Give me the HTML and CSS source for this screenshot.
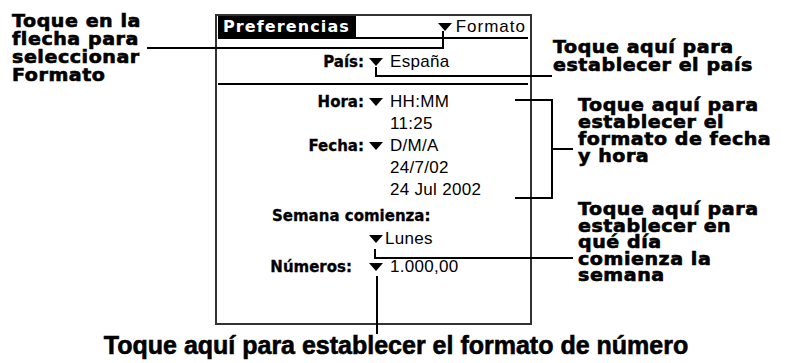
FILE: index.html
```html
<html>

<head>
    <link rel="stylesheet" href="styles.css">
</head>

<body>
    <div class="page">
        <div class="note note-left">Toque en la<br>flecha para<br>seleccionar<br>Formato</div>

        <div class="screen">
            <div class="titlebar">
                <div class="title">Preferencias</div>
                <div class="picker">
                    <svg class="arrow" viewBox="0 0 14 8"><polygon points="0,0 14,0 7,8" /></svg>
                    <span>Formato</span>
                </div>
            </div>

            <div class="field country">
                <span class="label">País:</span>
                <svg class="arrow" viewBox="0 0 14 8"><polygon points="0,0 14,0 7,8" /></svg>
                <span class="value">España</span>
            </div>

            <div class="divider"></div>

            <div class="field">
                <span class="label">Hora:</span>
                <svg class="arrow" viewBox="0 0 14 8"><polygon points="0,0 14,0 7,8" /></svg>
                <span class="value">HH:MM</span>
            </div>
            <div class="field">
                <span class="label"></span><span></span>
                <span class="value">11:25</span>
            </div>
            <div class="field">
                <span class="label">Fecha:</span>
                <svg class="arrow" viewBox="0 0 14 8"><polygon points="0,0 14,0 7,8" /></svg>
                <span class="value">D/M/A</span>
            </div>
            <div class="field">
                <span class="label"></span><span></span>
                <span class="value">24/7/02</span>
            </div>
            <div class="field">
                <span class="label"></span><span></span>
                <span class="value">24 Jul 2002</span>
            </div>

            <div class="heading">Semana comienza:</div>
            <div class="field">
                <span class="label"></span>
                <svg class="arrow" viewBox="0 0 14 8"><polygon points="0,0 14,0 7,8" /></svg>
                <span class="value value-tight">Lunes</span>
            </div>

            <div class="field numbers">
                <span class="label">Números:</span>
                <svg class="arrow" viewBox="0 0 14 8"><polygon points="0,0 14,0 7,8" /></svg>
                <span class="value">1.000,00</span>
            </div>
        </div>

        <div class="notes-right">
            <div class="note note-country">Toque aquí para<br>establecer el país</div>
            <div class="note note-date">Toque aquí para<br>establecer el<br>formato de fecha<br>y hora</div>
            <div class="note note-week">Toque aquí para<br>establecer en<br>qué día<br>comienza la<br>semana</div>
        </div>

        <div class="note-bottom">Toque aquí para establecer el formato de número</div>

        <svg class="leaders" width="792" height="363">
            <polyline points="147,48 443,48 443,31" />
            <polyline points="376,67 376,76 552,76" />
            <polyline points="515,100 552,100 552,198 515,198" />
            <polyline points="552,149 573,149" />
            <polyline points="375,249 375,258 573,258" />
            <polyline points="377,276 377,334" />
        </svg>
    </div>
</body>

</html>
```

FILE: styles.css
```css
* {
    box-sizing: border-box;
}

body {
    margin: 0;
    background: #fff;
    color: #000;
}

.page {
    position: relative;
    width: 792px;
    height: 363px;
    display: grid;
    grid-template-columns: 215px 317px 1fr;
    grid-template-rows: 325px 1fr;
}

/* callout text round the screen */
.note {
    font-family: "DejaVu Sans", sans-serif;
    font-weight: 700;
    font-size: 17px;
    line-height: 17px;
    letter-spacing: 0.5px;
    white-space: nowrap;
    -webkit-text-stroke: 0.6px #000;
    transform: scaleX(1.12);
    transform-origin: left top;
}

.note-left {
    margin: 12px 0 0 12px;
    line-height: 18px;
}

.notes-right {
    display: flex;
    flex-direction: column;
    align-items: flex-start;
}

.note-country {
    margin: 38px 0 0 21px;
    line-height: 18px;
}

.note-date {
    margin: 23px 0 0 46px;
}

.note-week {
    margin: 36px 0 0 46px;
    line-height: 16.5px;
}

.note-bottom {
    grid-column: 1 / -1;
    padding-top: 8px;
    text-align: center;
    font-family: "Liberation Sans", sans-serif;
    font-weight: 700;
    font-size: 25px;
    line-height: 25px;
    -webkit-text-stroke: 0.6px #000;
}

/* the handheld screen */
.screen {
    margin-top: 14px;
    height: 311px;
    border: 2px solid #333;
    font-family: "Liberation Sans", sans-serif;
    font-size: 16px;
}

.titlebar {
    display: flex;
    height: 23px;
    margin: 0 2px 0 1px;
    border-bottom: 2px solid #000;
}

.title {
    display: flex;
    align-items: center;
    width: 138px;
    padding-left: 5px;
    background: #000;
    color: #fff;
    font-family: "DejaVu Sans", sans-serif;
    font-weight: 700;
    font-size: 16px;
    letter-spacing: 1.1px;
}

.picker {
    display: flex;
    align-items: center;
    gap: 4px;
    margin-left: auto;
    padding-right: 2px;
    font-size: 17px;
    letter-spacing: 1px;
}

.arrow {
    width: 14px;
    height: 8px;
}

.field {
    display: grid;
    grid-template-columns: 147px 16px 1fr;
    column-gap: 5px;
    align-items: center;
    height: 22px;
}

.country {
    margin-top: 12px;
}

.divider {
    height: 2px;
    margin: 10px 2px 6px 1px;
    background: #000;
}

.label {
    text-align: right;
    font-family: "DejaVu Sans", sans-serif;
    font-weight: 700;
    font-size: 15px;
    -webkit-text-stroke: 0.3px #000;
}

.numbers {
    margin-top: 6px;
}

.numbers .label {
    padding-right: 12px;
}

.value {
    font-size: 17px;
    letter-spacing: 0.3px;
}

.value-tight {
    margin-left: -5px;
}

.heading {
    height: 24px;
    margin-top: 3px;
    padding-left: 55px;
    display: flex;
    align-items: center;
    font-family: "DejaVu Sans", sans-serif;
    font-weight: 700;
    font-size: 15px;
    -webkit-text-stroke: 0.3px #000;
}

/* leader lines from the callouts */
.leaders {
    position: absolute;
    top: 0;
    left: 0;
    pointer-events: none;
}

.leaders polyline {
    fill: none;
    stroke: #000;
    stroke-width: 2;
}
```
